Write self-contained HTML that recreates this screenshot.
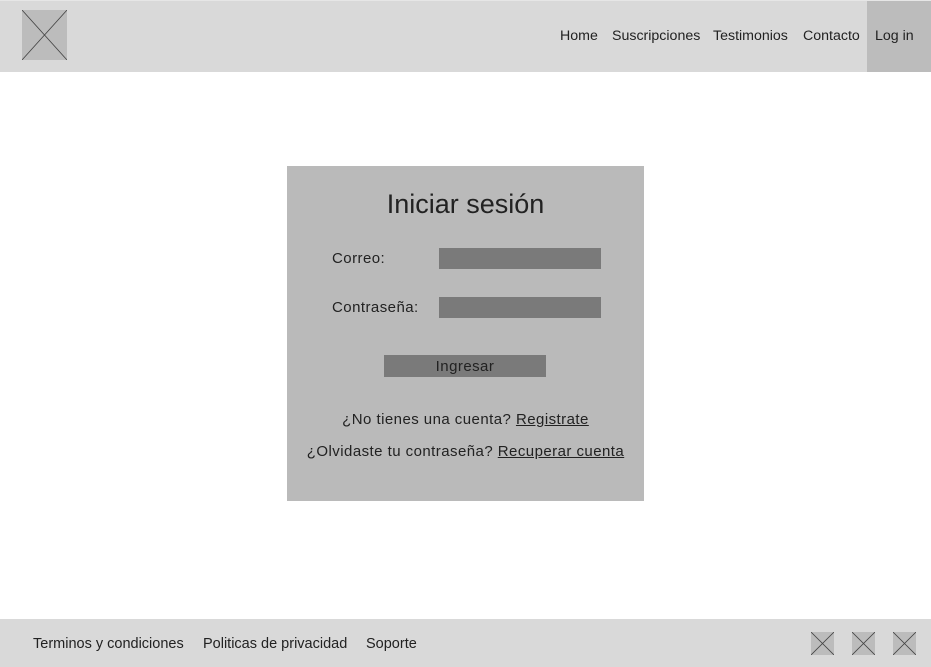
<!DOCTYPE html>
<html><head><meta charset="utf-8"><style>
*{margin:0;padding:0;box-sizing:border-box}
body{width:931px;height:667px;position:relative;background:#fff;font-family:"Liberation Sans",sans-serif;color:#222;overflow:hidden}
.a{position:absolute;white-space:nowrap}
.nav{font-size:14.2px;top:28px}
.ft{font-size:14.5px;top:636px}
u{text-decoration:underline}
.t{font-size:15px;letter-spacing:0.45px}
</style></head><body>
<div class="a" style="left:0;top:0;width:931px;height:72px;background:#d9d9d9;border-top:1px solid #e6e6e6"></div>
<div class="a" style="left:867px;top:1px;width:64px;height:71px;background:#bcbcbc"></div>
<svg class="a" style="left:22px;top:10px" width="45" height="50"><rect width="45" height="50" fill="#bcbcbc"/><path d="M0 0L45 50M45 0L0 50" stroke="#444" stroke-width="0.8"/></svg>
<div class="a nav" style="left:560px">Home</div>
<div class="a nav" style="left:612px">Suscripciones</div>
<div class="a nav" style="left:713px">Testimonios</div>
<div class="a nav" style="left:803px">Contacto</div>
<div class="a nav" style="left:875px">Log in</div>

<div class="a" style="left:287px;top:166px;width:357px;height:335px;background:#bababa"></div>
<div class="a" style="left:287px;top:189px;width:357px;text-align:center;font-size:27px">Iniciar sesión</div>
<div class="a t" style="left:332px;top:250px">Correo:</div>
<div class="a t" style="left:332px;top:299px">Contraseña:</div>
<div class="a" style="left:439px;top:248px;width:162px;height:21px;background:#7a7a7a"></div>
<div class="a" style="left:439px;top:297px;width:162px;height:21px;background:#7a7a7a"></div>
<div class="a t" style="left:384px;top:355px;width:162px;height:22px;background:#7a7a7a;text-align:center;line-height:23px">Ingresar</div>
<div class="a t" style="left:287px;top:411px;width:357px;text-align:center">¿No tienes una cuenta? <u>Registrate</u></div>
<div class="a t" style="left:287px;top:443px;width:357px;text-align:center">¿Olvidaste tu contraseña? <u>Recuperar cuenta</u></div>

<div class="a" style="left:0;top:619px;width:931px;height:48px;background:#d9d9d9"></div>
<div class="a ft" style="left:33px">Terminos y condiciones</div>
<div class="a ft" style="left:203px">Politicas de privacidad</div>
<div class="a ft" style="left:366px">Soporte</div>
<svg class="a" style="left:811px;top:632px" width="23" height="23"><rect width="23" height="23" fill="#bcbcbc"/><path d="M0 0L23 23M23 0L0 23" stroke="#444" stroke-width="0.8"/></svg>
<svg class="a" style="left:852px;top:632px" width="23" height="23"><rect width="23" height="23" fill="#bcbcbc"/><path d="M0 0L23 23M23 0L0 23" stroke="#444" stroke-width="0.8"/></svg>
<svg class="a" style="left:893px;top:632px" width="23" height="23"><rect width="23" height="23" fill="#bcbcbc"/><path d="M0 0L23 23M23 0L0 23" stroke="#444" stroke-width="0.8"/></svg>
</body></html>
